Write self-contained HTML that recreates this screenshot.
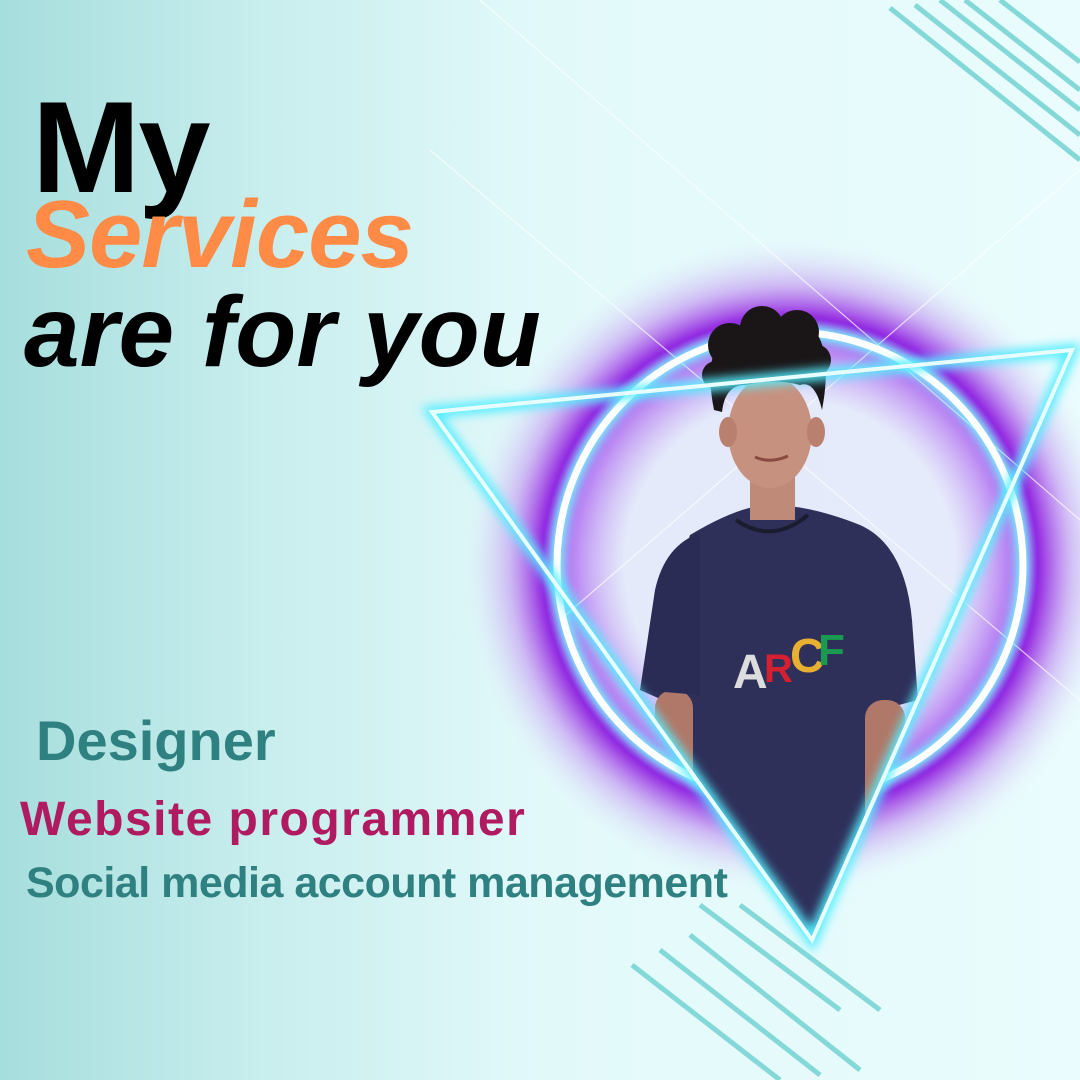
<!DOCTYPE html>
<html><head><meta charset="utf-8"><style>
html,body{margin:0;padding:0}
body{width:1080px;height:1080px;overflow:hidden;position:relative;background:linear-gradient(90deg,#a6dedd 0%,#c9eeee 25%,#e2f9fa 50%,#eafcfd 100%);font-family:"Liberation Sans",sans-serif}
svg{position:absolute;left:0;top:0}
.t{position:absolute;font-weight:bold;white-space:nowrap;font-family:"Liberation Sans",sans-serif;letter-spacing:-2px}
</style></head><body>
<svg width="1080" height="1080" viewBox="0 0 1080 1080">
<defs>
<radialGradient id="pg" cx="790" cy="565" r="330" gradientUnits="userSpaceOnUse">
<stop offset="0.5" stop-color="#e4e0fa" stop-opacity="0.6"/>
<stop offset="0.68" stop-color="#b070f0"/>
<stop offset="0.75" stop-color="#9020e0"/>
<stop offset="0.85" stop-color="#c090f0" stop-opacity="0.6"/>
<stop offset="1" stop-color="#e6f8fb" stop-opacity="0"/>
</radialGradient>
<filter id="gl"><feGaussianBlur stdDeviation="5"/></filter>
<clipPath id="tri"><polygon points="432,412 1072,350 812,940"/></clipPath>
</defs>
<g stroke="#6cd0d0" stroke-width="5" opacity="0.8">
<line x1="890" y1="8" x2="1080" y2="160"/><line x1="915" y1="5" x2="1080" y2="135"/><line x1="940" y1="0" x2="1080" y2="110"/><line x1="965" y1="0" x2="1080" y2="90"/><line x1="1000" y1="0" x2="1080" y2="62"/>
<line x1="632" y1="965" x2="780" y2="1080"/><line x1="660" y1="950" x2="820" y2="1075"/><line x1="690" y1="935" x2="860" y2="1070"/><line x1="700" y1="905" x2="840" y2="1010"/><line x1="740" y1="905" x2="880" y2="1010"/>
</g>
<circle cx="790" cy="565" r="330" fill="url(#pg)"/>
<g stroke="#ffffff" stroke-width="1.2" opacity="0.7">
<line x1="430" y1="150" x2="1080" y2="700"/><line x1="1080" y1="170" x2="560" y2="620"/><line x1="480" y1="0" x2="1080" y2="520"/>
</g>
<circle cx="790" cy="565" r="233" fill="none" stroke="#7ff" stroke-width="14" filter="url(#gl)"/>
<circle cx="790" cy="565" r="233" fill="none" stroke="#fff" stroke-width="7"/>
<g clip-path="url(#tri)">
<path d="M690 535 Q740 505 770 505 Q810 505 860 525 Q905 545 912 620 L918 700 L880 710 L880 820 L812 940 L690 840 L685 710 L640 690 Z" fill="#2e305a"/>
<rect x="865" y="700" width="40" height="140" rx="18" fill="#b07868"/>
<rect x="655" y="690" width="38" height="130" rx="18" fill="#b07868"/>
<rect x="750" y="470" width="45" height="50" fill="#c08a78"/>
<path d="M640 690 L655 590 Q665 545 700 533 L700 695 Z" fill="#2a2c55"/>
</g>
<path d="M736 520 Q772 545 808 515" fill="none" stroke="#1c1c30" stroke-width="4"/>
<ellipse cx="770" cy="432" rx="42" ry="56" fill="#c79180"/>
<ellipse cx="728" cy="432" rx="9" ry="15" fill="#b98070"/><ellipse cx="816" cy="432" rx="9" ry="15" fill="#b98070"/>
<path d="M714 410 Q700 340 740 325 Q770 312 805 322 Q835 340 822 410 Q815 380 800 385 Q775 378 745 385 Q725 385 722 412 Z" fill="#1a1618"/>
<circle cx="730" cy="345" r="22" fill="#1a1618"/><circle cx="762" cy="328" r="22" fill="#1a1618"/><circle cx="797" cy="332" r="22" fill="#1a1618"/><circle cx="815" cy="360" r="16" fill="#1a1618"/><circle cx="716" cy="375" r="14" fill="#1a1618"/>
<path d="M755 457 Q770 464 788 456" stroke="#8a4a40" stroke-width="3" fill="none"/>
<text x="733" y="688" font-family="Liberation Sans" font-weight="bold" font-size="48" fill="#ddd">A</text>
<text x="764" y="682" font-family="Liberation Sans" font-weight="bold" font-size="40" fill="#d42030">R</text>
<text x="790" y="672" font-family="Liberation Sans" font-weight="bold" font-size="48" fill="#e8b030">C</text>
<text x="818" y="665" font-family="Liberation Sans" font-weight="bold" font-size="44" fill="#1a9a50">F</text>
<polygon points="432,412 1072,350 812,940" fill="none" stroke="#5ef" stroke-width="12" filter="url(#gl)"/>
<polygon points="432,412 1072,350 812,940" fill="none" stroke="#e8ffff" stroke-width="4"/>
</svg>
<div class="t" style="left:32px;top:72px;font-size:130px;color:#000">My</div>
<div class="t" style="left:26px;top:180px;font-size:96px;color:#ff8b46;font-style:italic;letter-spacing:-1px">Services</div>
<div class="t" style="left:24px;top:275px;font-size:100px;color:#000;font-style:italic;letter-spacing:0px">are for you</div>
<div class="t" style="left:36px;top:708px;font-size:56px;color:#2f8080;letter-spacing:0px">Designer</div>
<div class="t" style="left:20px;top:792px;font-size:48px;color:#b01a60;letter-spacing:1.5px">Website programmer</div>
<div class="t" style="left:26px;top:859px;font-size:43px;color:#2f8080;letter-spacing:-0.5px">Social media account management</div>
</body></html>
